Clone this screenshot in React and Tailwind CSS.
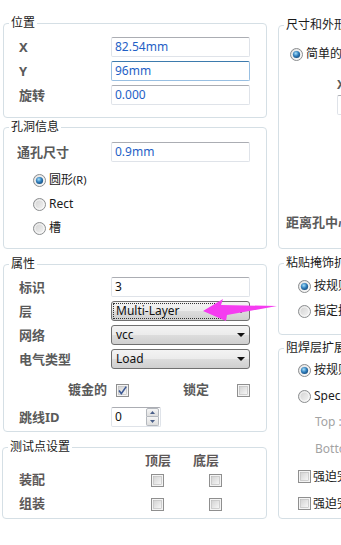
import React from 'react';

const Radio = ({ checked }) => (
  <svg width="13" height="13" viewBox="0 0 13 13" className="shrink-0">
    <defs>
      <linearGradient id="rbg" x1="0" y1="0" x2="1" y2="1">
        <stop offset="0" stopColor="#cfcfcf" />
        <stop offset="1" stopColor="#f7f7f7" />
      </linearGradient>
      <radialGradient id="rdot" cx="0.4" cy="0.35" r="0.7">
        <stop offset="0" stopColor="#a6e0fb" />
        <stop offset="0.55" stopColor="#2f7dbb" />
        <stop offset="1" stopColor="#174c7c" />
      </radialGradient>
    </defs>
    <circle cx="6.5" cy="6.5" r="6" fill="url(#rbg)" stroke="#8c8e90" />
    <circle cx="6.5" cy="6.5" r="4.6" fill="none" stroke="#ffffff" strokeOpacity="0.7" />
    {checked && <circle cx="6.5" cy="6.5" r="3.6" fill="url(#rdot)" />}
  </svg>
);

const Check = ({ checked }) => (
  <svg width="13" height="13" viewBox="0 0 13 13" className="shrink-0">
    <defs>
      <linearGradient id="cbg" x1="0" y1="0" x2="1" y2="1">
        <stop offset="0" stopColor="#d2d2d2" />
        <stop offset="1" stopColor="#f8f8f8" />
      </linearGradient>
    </defs>
    <rect x="0.5" y="0.5" width="12" height="12" fill="#f4f4f4" stroke="#8f8f8f" />
    <rect x="2.5" y="2.5" width="8" height="8" fill="url(#cbg)" stroke="#b8b8b8" strokeWidth="0.6" />
    {checked && (
      <path d="M3 6.6 L5.3 9.6 L10.2 2.6" fill="none" stroke="#3b5894" strokeWidth="1.6" />
    )}
  </svg>
);

const Group = ({ title, className, children }) => (
  <fieldset className={`min-w-0 border border-[#d5dfe5] rounded-[4px] ${className}`}>
    <legend className="ml-[5px] px-[2px] text-[12px] leading-[16px] text-[#1a1a1a]">{title}</legend>
    {children}
  </fieldset>
);

const Label = ({ children }) => (
  <div className="w-[92px] shrink-0 text-[13px] font-bold leading-[20px] text-[#5a5a5a]">{children}</div>
);

const TextBox = ({ value, focused, dark }) => (
  <div
    className={`w-[139px] h-[20px] rounded-[2px] border px-[3px] text-[12px] leading-[18px] ${
      focused ? 'border-[#98bfe2] border-t-[#3d7bad]' : 'border-[#dfe3e9] border-t-[#abadb3]'
    } ${dark ? 'text-[#111]' : 'text-[#1f5fc6]'}`}
  >
    {value}
  </div>
);

const Combo = ({ value, focused }) => (
  <div className="w-[139px] h-[20px] rounded-[3px] border border-[#707070] bg-[linear-gradient(#f3f3f3,#ebebeb_50%,#dddddd_50%,#cfcfcf)] flex items-center pl-[1px]">
    <div
      className={`flex-1 h-[16px] mr-[16px] pl-[2px] text-[12px] leading-[14px] text-[#111] border ${
        focused ? 'border-dotted border-[#333]' : 'border-transparent'
      }`}
    >
      {value}
    </div>
    <svg width="8" height="4" viewBox="0 0 8 4" className="mr-[4px]">
      <polygon points="0,0 8,0 4,4" fill="#111" />
    </svg>
  </div>
);

const Row = ({ label, children }) => (
  <div className="flex items-center h-[20px]">
    <Label>{label}</Label>
    {children}
  </div>
);

const RadioRow = ({ checked, children, className }) => (
  <div className={`flex items-center gap-[3px] text-[12px] text-[#1a1a1a] whitespace-nowrap ${className}`}>
    <Radio checked={checked} />
    <span>{children}</span>
  </div>
);

export default function App() {
  return (
    <div className="relative w-[341px] h-[545px] overflow-hidden bg-white flex gap-[11px] pl-[3px] font-['Noto_Sans','Noto_Sans_CJK_SC',sans-serif]">
      {/* left column */}
      <div className="w-[264px] shrink-0 flex flex-col pt-[15px]">
        <Group title="位置" className="h-[103px]">
          <div className="pl-[15px] pt-[6px] flex flex-col gap-[4px]">
            <Row label="X"><TextBox value="82.54mm" /></Row>
            <Row label="Y"><TextBox value="96mm" focused /></Row>
            <Row label="旋转"><TextBox value="0.000" /></Row>
          </div>
        </Group>

        <Group title="孔洞信息" className="mt-[1px] h-[130px]">
          <div className="pl-[13px] pt-[7px]">
            <div className="flex items-center h-[20px]">
              <div className="w-[94px] shrink-0 text-[13px] font-bold leading-[20px] text-[#5a5a5a]">通孔尺寸</div>
              <TextBox value="0.9mm" />
            </div>
          </div>
          <div className="pl-[29px] mt-[6px] flex flex-col">
            <RadioRow checked className="h-[24px]">
              圆形<span className="text-[11px]">(R)</span>
            </RadioRow>
            <RadioRow className="h-[24px]">Rect</RadioRow>
            <RadioRow className="h-[24px]">槽</RadioRow>
          </div>
        </Group>

        <Group title="属性" className="mt-[7px] h-[176px]">
          <div className="pl-[15px] pt-[5px] flex flex-col gap-[4px]">
            <Row label="标识"><TextBox value="3" dark /></Row>
            <Row label="层"><Combo value="Multi-Layer" focused /></Row>
            <Row label="网络"><Combo value="vcc" /></Row>
            <Row label="电气类型"><Combo value="Load" /></Row>
            <div className="mt-[7px] flex items-center h-[20px] text-[13px] font-bold text-[#5a5a5a]">
              <div className="w-[88px] text-right">镀金的</div>
              <div className="ml-[9px]"><Check checked /></div>
              <div className="ml-[54px] w-[27px]">锁定</div>
              <div className="ml-[27px]"><Check /></div>
            </div>
            <div className="mt-[3px] flex items-center h-[20px]">
              <Label>跳线ID</Label>
              <div className="w-[50px] h-[20px] flex items-center border border-[#dfe3e9] border-t-[#abadb3] rounded-[2px] pl-[3px] pr-[1px]">
                <span className="flex-1 text-[12px] text-[#111]">0</span>
                <div className="flex flex-col">
                  <div className="w-[13px] h-[9px] border border-[#b4b8be] rounded-t-[2px] bg-[linear-gradient(#f6f6f6,#dedede)] flex items-center justify-center">
                    <svg width="5" height="3" viewBox="0 0 5 3"><polygon points="0,3 5,3 2.5,0" fill="#4a5f88" /></svg>
                  </div>
                  <div className="w-[13px] h-[9px] border border-t-0 border-[#b4b8be] rounded-b-[2px] bg-[linear-gradient(#f6f6f6,#dedede)] flex items-center justify-center">
                    <svg width="5" height="3" viewBox="0 0 5 3"><polygon points="0,0 5,0 2.5,3" fill="#4a5f88" /></svg>
                  </div>
                </div>
              </div>
            </div>
          </div>
        </Group>

        <Group title="测试点设置" className="mt-[7px] h-[80px] -ml-[1px]">
          <div className="pl-[16px] text-[13px] font-bold text-[#5d5858]">
            <div className="-mt-[3px] h-[16px] leading-[16px] flex">
              <div className="w-[126px]" />
              <div className="w-[48px]">顶层</div>
              <div>底层</div>
            </div>
            <div className="h-[24px] flex items-center">
              <div className="w-[132px]">装配</div>
              <Check />
              <div className="ml-[45px]"><Check /></div>
            </div>
            <div className="h-[24px] flex items-center">
              <div className="w-[132px]">组装</div>
              <Check />
              <div className="ml-[45px]"><Check /></div>
            </div>
          </div>
        </Group>
      </div>

      {/* right column */}
      <div className="w-[150px] shrink-0 flex flex-col pt-[17px]">
        <Group title="尺寸和外形" className="h-[232px]">
          <RadioRow checked className="mt-[13px] h-[16px] pl-[11px]">简单的</RadioRow>
          <div className="pl-[58px] mt-[16px]">
            <div className="h-[14px] text-[12px] leading-[14px] text-[#5a5a5a] font-bold">X</div>
            <div className="mt-[3px] w-[80px] h-[20px] border border-[#dfe3e9] border-t-[#abadb3] rounded-[2px]" />
          </div>
          <div className="mt-[99px] pl-[7px] h-[16px] text-[13px] leading-[16px] font-bold text-[#5a5a5a] whitespace-nowrap">
            距离孔中心(X/Y)的偏移
          </div>
        </Group>

        <Group title="粘贴掩饰扩展" className="mt-[6px] h-[80px]">
          <div className="pl-[19px] pt-[3px] flex flex-col gap-[1px]">
            <RadioRow checked className="h-[24px]">按规则扩展值</RadioRow>
            <RadioRow className="h-[24px]">指定扩展值</RadioRow>
          </div>
        </Group>

        <Group title="阻焊层扩展" className="mt-[5px] h-[179px]">
          <div className="pl-[19px] pt-[1px] flex flex-col">
            <RadioRow checked className="h-[26px]">按规则扩展值</RadioRow>
            <RadioRow className="h-[26px]">Specify expansion value</RadioRow>
            <div className="h-[26px] flex items-center pl-[17px] text-[12px] text-[#a3a3a3]">Top :</div>
            <div className="h-[28px] flex items-center pl-[17px] text-[12px] text-[#a3a3a3]">Bottom :</div>
            <div className="h-[27px] flex items-center gap-[2px] text-[12px] text-[#1a1a1a] whitespace-nowrap">
              <Check /><span>强迫完成顶部隆起</span>
            </div>
            <div className="h-[27px] flex items-center gap-[2px] text-[12px] text-[#1a1a1a] whitespace-nowrap">
              <Check /><span>强迫完成底部隆起</span>
            </div>
          </div>
        </Group>
      </div>

      {/* annotation arrow */}
      <svg className="absolute left-[200px] top-[296px]" width="80" height="28" viewBox="0 0 80 28">
        <polygon points="3,15 23,3 21,9 77,10 27,19 26,25" fill="#f53cf0" />
      </svg>
    </div>
  );
}
